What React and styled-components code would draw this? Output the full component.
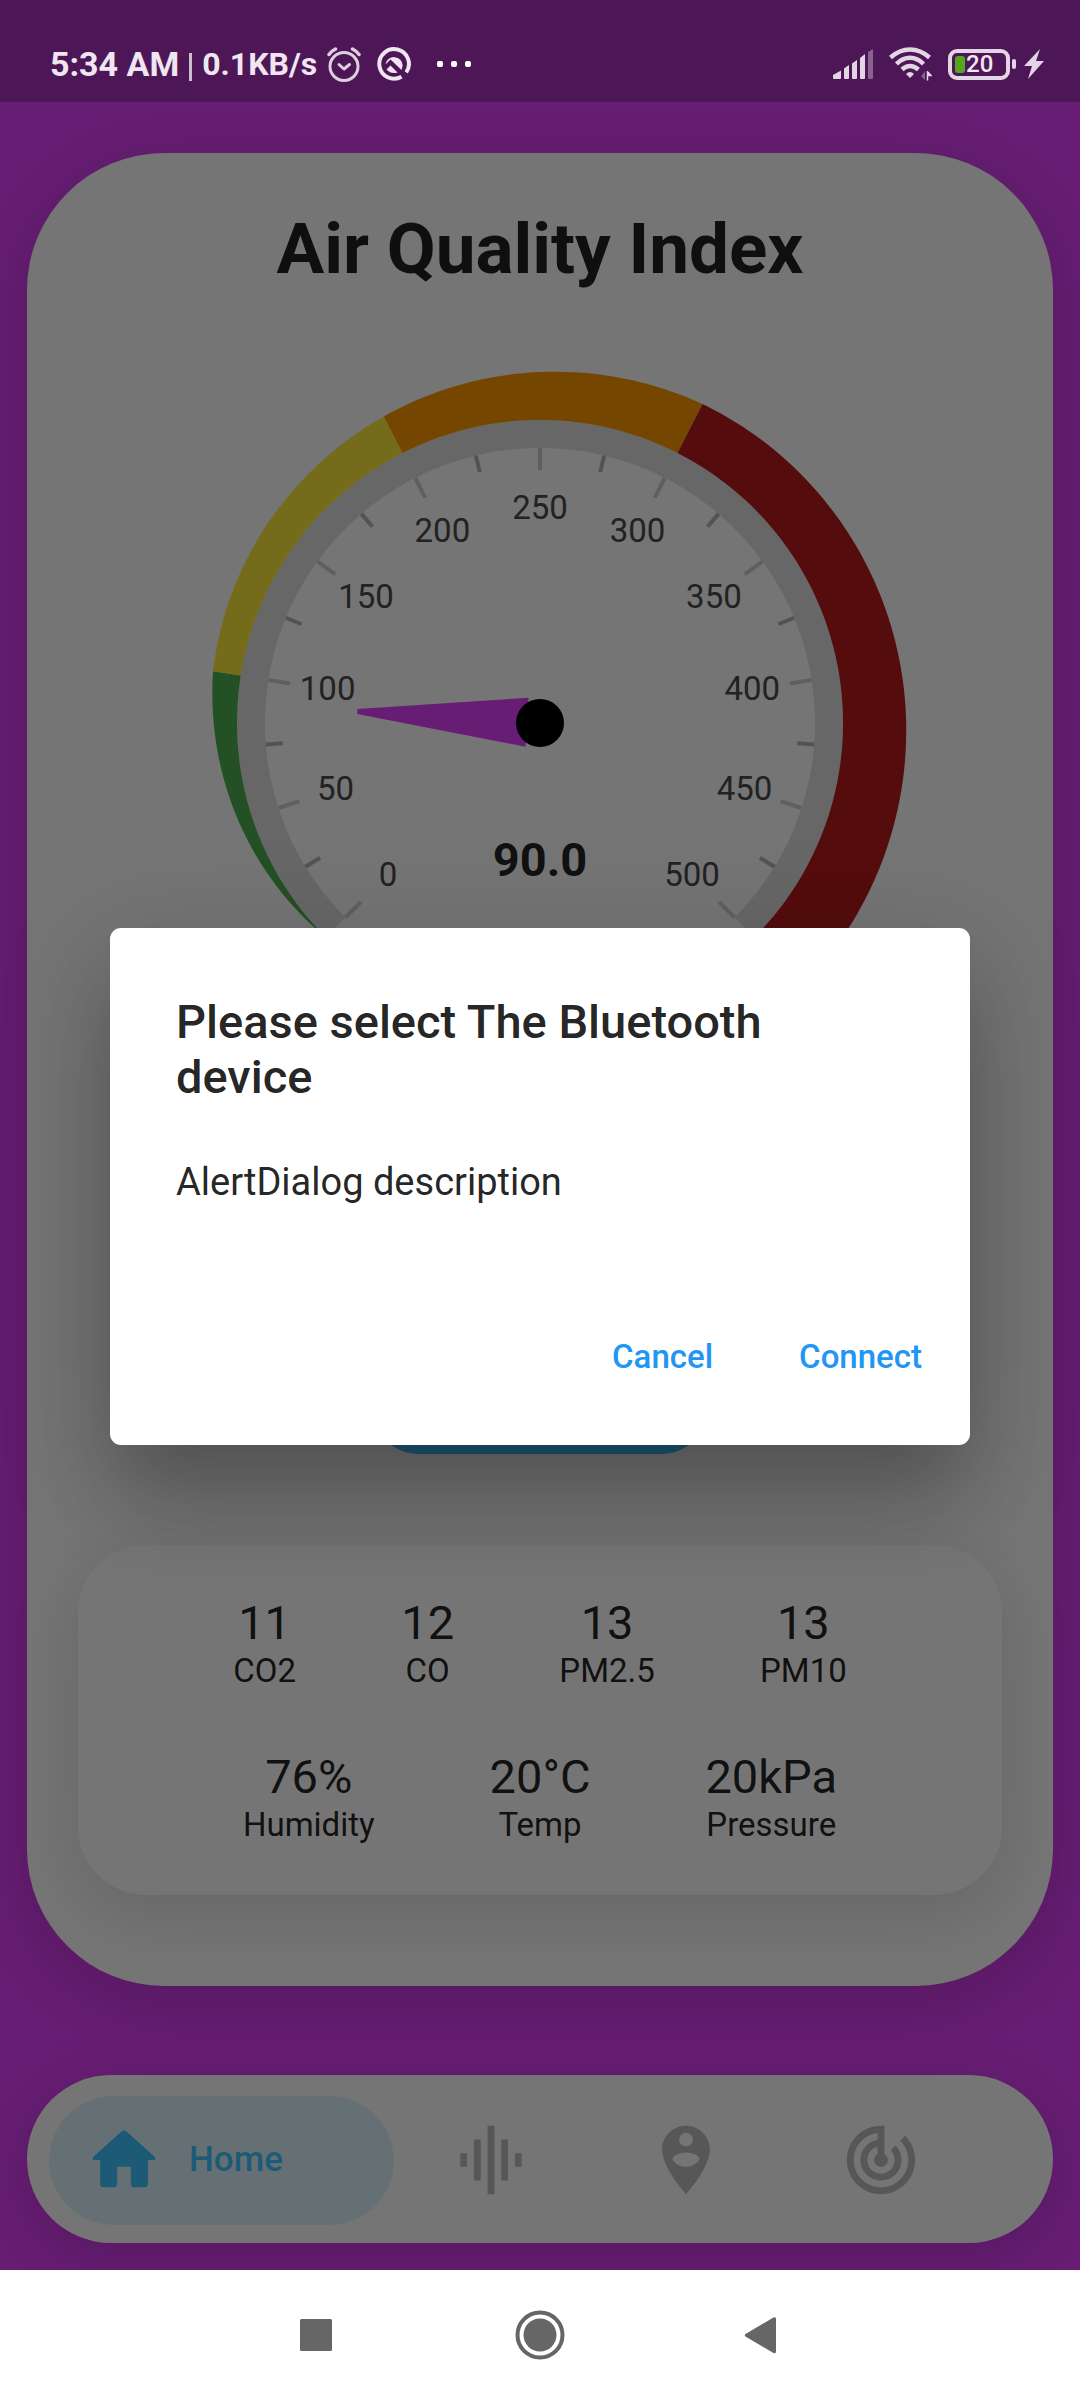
import React from "react";
import styled, { createGlobalStyle } from "styled-components";

const GlobalStyle = createGlobalStyle`
  * { box-sizing: border-box; }
  body {
    margin: 0;
    background: #ffffff;
    font-family: Roboto, "Liberation Sans", sans-serif;
    color: rgba(0, 0, 0, 0.87);
  }
  button {
    font-family: inherit;
    border: 0;
    padding: 0;
    background: none;
    cursor: pointer;
  }
  h1, h2, p, dl, dt, dd { margin: 0; }
`;

const Phone = styled.div`
  display: flex;
  flex-direction: column;
  min-height: 100vh;
`;

/* ---------- status bar ---------- */

const StatusBar = styled.header`
  position: relative;
  z-index: 2;
  display: flex;
  align-items: center;
  justify-content: space-between;
  height: 102px;
  padding: 26px 36px 0 50px;
  background: #4d1656;
  color: #efe6f1;
`;

const StatusGroup = styled.div`
  display: flex;
  align-items: center;
  gap: ${(p) => p.$gap}px;
`;

const Clock = styled.span`
  font-size: 34px;
  line-height: 40px;
  font-weight: 700;
`;

const Divider = styled.span`
  width: 3px;
  height: 28px;
  margin-top: 6px;
  background: #cdbfd0;
`;

const NetSpeed = styled.span`
  font-size: 32px;
  line-height: 40px;
  font-weight: 700;
`;

const Battery = styled.div`
  display: flex;
  align-items: center;
  gap: 2px;
`;

const BatteryShell = styled.div`
  display: flex;
  align-items: center;
  gap: 1px;
  width: 62px;
  height: 31px;
  padding: 0 3px;
  border: 4px solid #e2d6e4;
  border-radius: 9px;
  color: #efe6f1;
  font-size: 24px;
  line-height: 24px;
  font-weight: 500;
`;

const BatteryLevel = styled.span`
  width: 10px;
  height: 17px;
  border-radius: 3px;
  background: #55a51f;
`;

const BatteryNub = styled.span`
  width: 4px;
  height: 10px;
  border-radius: 2px;
  background: #e2d6e4;
`;

/* ---------- app body ---------- */

const AppBody = styled.main`
  position: relative;
  flex: 1;
  display: flex;
  flex-direction: column;
  gap: 89px;
  padding: 51px 27px 27px;
  background: #e040fb;
`;

const Card = styled.section`
  flex: 1;
  display: flex;
  flex-direction: column;
  align-items: center;
  padding: 54px 51px 91px;
  border-radius: 137px;
  background: #ffffff;
  box-shadow: 0 16px 76px rgba(0, 0, 0, 0.18);
`;

const Title = styled.h1`
  font-size: 71px;
  line-height: 84px;
  font-weight: 700;
`;

const GaugeArt = styled.svg`
  display: block;
  width: 756px;
  max-width: 100%;
  height: auto;
  margin-top: 54px;
`;

const PillButton = styled.button`
  width: 340px;
  height: 99px;
  margin-top: auto;
  border-radius: 50px;
  background: #40c4ff;
`;

const Stats = styled.div`
  display: flex;
  flex-direction: column;
  justify-content: space-between;
  align-self: stretch;
  height: 350px;
  margin-top: 91px;
  padding: 50px;
  border-radius: 68px;
  background: #ffffff;
  box-shadow: 0 16px 70px rgba(0, 0, 0, 0.14);
`;

const StatRow = styled.dl`
  display: flex;
  justify-content: space-evenly;
`;

const Stat = styled.div`
  display: flex;
  flex-direction: column-reverse;
  align-items: center;
`;

const StatValue = styled.dd`
  font-size: 47px;
  line-height: 56px;
`;

const StatLabel = styled.dt`
  font-size: 33px;
  line-height: 40px;
`;

/* ---------- bottom navigation ---------- */

const NavBar = styled.nav`
  display: flex;
  align-items: center;
  height: 168px;
  padding: 2px 75px 0 22px;
  border-radius: 84px;
  background: #ffffff;
  box-shadow: 0 14px 66px rgba(0, 0, 0, 0.16);
`;

const HomeTab = styled.button`
  display: flex;
  align-items: center;
  gap: 24px;
  width: 345px;
  height: 129px;
  padding-left: 34px;
  border-radius: 65px;
  background: rgba(64, 196, 255, 0.18);
  color: #40c4ff;
  font-size: 35px;
  line-height: 40px;
  font-weight: 500;
`;

const TabList = styled.div`
  flex: 1;
  display: flex;
`;

const Tab = styled.button`
  flex: 1;
  display: flex;
  justify-content: center;
  color: #bdbdbd;
`;

/* ---------- dialog ---------- */

const Scrim = styled.div`
  position: absolute;
  inset: 0;
  display: flex;
  align-items: center;
  justify-content: center;
  padding: 0 110px;
  background: rgba(0, 0, 0, 0.54);
`;

const Dialog = styled.section`
  width: 100%;
  padding: 66px 16px 38px 66px;
  border-radius: 11px;
  background: #ffffff;
  box-shadow:
    0 60px 80px -10px rgba(0, 0, 0, 0.18),
    0 30px 110px 10px rgba(0, 0, 0, 0.16);
`;

const DialogTitle = styled.h2`
  padding-right: 50px;
  font-size: 47px;
  line-height: 55px;
  font-weight: 500;
`;

const DialogText = styled.p`
  margin-top: 56px;
  font-size: 38px;
  line-height: 44px;
`;

const DialogActions = styled.div`
  display: flex;
  justify-content: flex-end;
  gap: 22px;
  margin-top: 104px;
`;

const TextButton = styled.button`
  height: 99px;
  padding: 0 32px;
  color: #2196f3;
  font-size: 33px;
  line-height: 40px;
  font-weight: 500;
`;

/* ---------- system navigation ---------- */

const SystemNav = styled.footer`
  position: relative;
  z-index: 2;
  display: flex;
  align-items: center;
  justify-content: center;
  gap: 172px;
  height: 130px;
  background: #ffffff;
  color: #666666;
`;

const SystemKey = styled.button`
  display: flex;
  width: 50px;
  height: 50px;
  color: inherit;
`;

/* ---------- gauge ---------- */

const MAX = 500;
const BAND_INNER = 303;
const RING_INNER = 275;

const angleOf = (value) => ((135 + (value / MAX) * 270) * Math.PI) / 180;
const point = (radius, value) => {
  const a = angleOf(value);
  return [radius * Math.cos(a), radius * Math.sin(a)];
};
const toPath = (points) =>
  "M" + points.map(([x, y]) => `${x.toFixed(2)} ${y.toFixed(2)}`).join("L") + "Z";

/* A band whose thickness runs from startWidth to endWidth as the value rises. */
const bandPath = ({ from, to, startWidth, endWidth }) => {
  const outer = [];
  const inner = [];
  for (let v = from; v <= to; v += 2) {
    const width = startWidth + ((v - from) / (to - from)) * (endWidth - startWidth);
    outer.push(point(BAND_INNER + width, v));
    inner.unshift(point(BAND_INNER, v));
  }
  return toPath([...outer, ...inner]);
};

const ringPath = () => {
  const outer = [];
  const inner = [];
  for (let v = 0; v <= MAX; v += 2) {
    outer.push(point(BAND_INNER, v));
    inner.unshift(point(RING_INNER, v));
  }
  return toPath([...outer, ...inner]);
};

const bands = [
  { from: 0, to: 100, startWidth: 0, endWidth: 28, color: "#4caf50" },
  { from: 100, to: 200, startWidth: 28, endWidth: 41, color: "#ffeb3b" },
  { from: 200, to: 300, startWidth: 41, endWidth: 55, color: "#ff9800" },
  { from: 300, to: 500, startWidth: 55, endWidth: 69, color: "#b71c1c" },
];
const majors = [0, 50, 100, 150, 200, 250, 300, 350, 400, 450, 500];

function Gauge({ value }) {
  const needleTurn = 135 + (value / MAX) * 270;
  return (
    <GaugeArt viewBox="-378 -378 756 684" role="img" aria-label="Air quality gauge">
      <path d={ringPath()} fill="#e0e0e0" />
      {bands.map((b) => (
        <path key={b.from} d={bandPath(b)} fill={b.color} />
      ))}
      {majors.slice(0, -1).map((m) => {
        const [x1, y1] = point(RING_INNER, m + 25);
        const [x2, y2] = point(RING_INNER - 17, m + 25);
        return <line key={m} x1={x1} y1={y1} x2={x2} y2={y2} stroke="#b6b6b6" strokeWidth="4" />;
      })}
      {majors.map((m) => {
        const [x1, y1] = point(RING_INNER, m);
        const [x2, y2] = point(RING_INNER - 22, m);
        return <line key={m} x1={x1} y1={y1} x2={x2} y2={y2} stroke="#d0d0d0" strokeWidth="4" />;
      })}
      {majors.map((m) => {
        const [x, y] = point(215, m);
        return (
          <text key={m} x={x} y={y + 11} textAnchor="middle" fontSize="33" fill="#4a4a4a">
            {m}
          </text>
        );
      })}
      <text x="0" y="153" textAnchor="middle" fontSize="47" fontWeight="700" fill="rgba(0,0,0,0.87)">
        {value.toFixed(1)}
      </text>
      <path d="M13 -24.5L183 -2.5V2.5L13 24.5Z" fill="#e040fb" transform={`rotate(${needleTurn})`} />
      <circle r="24" fill="#000000" />
    </GaugeArt>
  );
}

/* ---------- icons ---------- */

const MaterialIcon = ({ d }) => (
  <svg width="82" height="82" viewBox="0 0 24 24" fill="currentColor" aria-hidden="true">
    <path d={d} />
  </svg>
);

const HOME =
  "M10 19v-5h4v5c0 .55.45 1 1 1h3c.55 0 1-.45 1-1v-7h1.7c.46 0 .68-.57.33-.87L12.67 3.6c-.38-.34-.96-.34-1.34 0l-8.36 7.53c-.34.3-.13.87.33.87H5v7c0 .55.45 1 1 1h3c.55 0 1-.45 1-1z";
const EQUALIZER = "M7 18h2V6H7v12zm4 4h2V2h-2v20zm-8-8h2v-4H3v4zm12 4h2V6h-2v12zm4-8v4h2v-4h-2z";
const PERSON_PIN =
  "M12 2C8.14 2 5 5.14 5 9c0 5.25 7 13 7 13s7-7.75 7-13c0-3.86-3.14-7-7-7zm0 2c1.1 0 2 .9 2 2 0 1.11-.9 2-2 2s-2-.89-2-2c0-1.1.9-2 2-2zm0 10c-1.67 0-3.14-.85-4-2.15.02-1.32 2.67-2.05 4-2.05s3.98.73 4 2.05c-.86 1.3-2.33 2.15-4 2.15z";
const RADAR =
  "M19.07 4.93l-1.41 1.41C19.1 7.79 20 9.79 20 12c0 4.42-3.58 8-8 8s-8-3.58-8-8c0-4.08 3.05-7.44 7-7.93v2.02C8.16 6.57 6 9.03 6 12c0 3.31 2.69 6 6 6s6-2.69 6-6c0-1.66-.67-3.16-1.76-4.24l-1.41 1.41C15.55 9.9 16 10.9 16 12c0 2.21-1.79 4-4 4s-4-1.79-4-4c0-1.86 1.28-3.41 3-3.86v2.14c-.6.35-1 .98-1 1.72 0 1.1.9 2 2 2s2-.9 2-2c0-.74-.4-1.38-1-1.72V2h-1C6.48 2 2 6.48 2 12s4.48 10 10 10 10-4.48 10-10c0-2.76-1.12-5.26-2.93-7.07z";

const AlarmIcon = () => (
  <svg width="34" height="35" viewBox="0 0 34 35" fill="none" stroke="#dccfde" strokeLinecap="round" aria-hidden="true">
    <circle cx="17" cy="19.5" r="14" strokeWidth="3" />
    <path d="M12 17.5l5 4.500 5.500-4.500" strokeWidth="3" strokeLinejoin="round" />
    <path d="M2 7.500Q4.500 4 8.500 2M32 7.500Q29.500 4 25.500 2" strokeWidth="3.500" />
  </svg>
);

const CompassIcon = () => (
  <svg width="34" height="34" viewBox="0 0 34 34" aria-hidden="true">
    <path d="M24.500 29.700A14.800 14.800 0 1 1 29.200 25.400" fill="none" stroke="#efe6f1" strokeWidth="4" />
    <path d="M8.500 17A8.700 8.700 0 0 1 25.700 18.500L24.500 23L13.500 12.500L9.500 16.500Z" fill="#efe6f1" />
    <path d="M13.500 18.500L20.500 25.500Q14 27.500 9.500 22.500Z" fill="#efe6f1" />
  </svg>
);

const DotsIcon = () => (
  <svg width="34" height="6" viewBox="0 0 34 6" fill="#ffffff" aria-hidden="true">
    <rect width="6" height="6" rx="2" />
    <rect x="14" width="6" height="6" rx="2" />
    <rect x="28" width="6" height="6" rx="2" />
  </svg>
);

const SignalIcon = () => (
  <svg width="40" height="30" viewBox="0 0 40 30" fill="#e2d6e4" aria-hidden="true">
    <path d="M0 26L8 21.500V29Q8 30 7 30H1Q0 30 0 29Z" />
    <path d="M11 19.500L16 16V29Q16 30 15 30H12Q11 30 11 29Z" />
    <path d="M19 14.500L24 11V29Q24 30 23 30H20Q19 30 19 29Z" />
    <path d="M27 9L32 5V29Q32 30 31 30H28Q27 30 27 29Z" />
    <path d="M35 3L40 0V29Q40 30 39 30H36Q35 30 35 29Z" opacity="0.4" />
  </svg>
);

const WifiIcon = () => (
  <svg width="43" height="34" viewBox="0 0 43 34" fill="none" stroke="#e2d6e4" strokeWidth="4.500" aria-hidden="true">
    <path d="M1.500 10.500Q10.500 2.500 21 2.500T40.500 10.500" />
    <path d="M7.500 17Q13.500 10.800 21 10.800T34.500 17" />
    <path d="M13 22.500Q17 19 21 19T29.500 22.500" />
    <path d="M17 27Q21 23 25 27L21 31Z" fill="#e2d6e4" stroke="none" />
    <path d="M36 24V33L32 29.500Z" fill="#84608b" stroke="none" />
    <path d="M38.500 24V33.500M38.500 24.500L42 28.500H39" fill="#e2d6e4" strokeWidth="1.500" />
  </svg>
);

const BoltIcon = () => (
  <svg width="20" height="30" viewBox="0 0 20 30" fill="#e2d6e4" aria-hidden="true">
    <path d="M16 0L0 17H8L4 30L20 12H12Z" />
  </svg>
);

/* ---------- data ---------- */

const gases = [
  ["11", "CO2"],
  ["12", "CO"],
  ["13", "PM2.5"],
  ["13", "PM10"],
];
const climate = [
  ["76%", "Humidity"],
  ["20°C", "Temp"],
  ["20kPa", "Pressure"],
];
const tabs = [
  ["Sound", EQUALIZER],
  ["Location", PERSON_PIN],
  ["Tracking", RADAR],
];

const Readings = ({ items }) => (
  <StatRow>
    {items.map(([value, label]) => (
      <Stat key={label}>
        <StatLabel>{label}</StatLabel>
        <StatValue>{value}</StatValue>
      </Stat>
    ))}
  </StatRow>
);

export default function App() {
  return (
    <Phone>
      <GlobalStyle />
      <StatusBar>
        <StatusGroup $gap={26}>
          <StatusGroup $gap={10}>
            <Clock>5:34 AM</Clock>
            <Divider />
            <NetSpeed>0.1KB/s</NetSpeed>
            <StatusGroup $gap={16}>
              <AlarmIcon />
              <CompassIcon />
            </StatusGroup>
          </StatusGroup>
          <DotsIcon />
        </StatusGroup>
        <StatusGroup $gap={16}>
          <SignalIcon />
          <WifiIcon />
          <StatusGroup $gap={8}>
            <Battery>
              <BatteryShell>
                <BatteryLevel />
                20
              </BatteryShell>
              <BatteryNub />
            </Battery>
            <BoltIcon />
          </StatusGroup>
        </StatusGroup>
      </StatusBar>

      <AppBody>
        <Card>
          <Title>Air Quality Index</Title>
          <Gauge value={90} />
          <PillButton aria-label="Select device" />
          <Stats>
            <Readings items={gases} />
            <Readings items={climate} />
          </Stats>
        </Card>

        <NavBar>
          <HomeTab>
            <MaterialIcon d={HOME} />
            Home
          </HomeTab>
          <TabList>
            {tabs.map(([name, d]) => (
              <Tab key={name} aria-label={name}>
                <MaterialIcon d={d} />
              </Tab>
            ))}
          </TabList>
        </NavBar>

        <Scrim>
          <Dialog role="alertdialog" aria-labelledby="dialog-title" aria-describedby="dialog-text">
            <DialogTitle id="dialog-title">Please select The Bluetooth device</DialogTitle>
            <DialogText id="dialog-text">AlertDialog description</DialogText>
            <DialogActions>
              <TextButton>Cancel</TextButton>
              <TextButton>Connect</TextButton>
            </DialogActions>
          </Dialog>
        </Scrim>
      </AppBody>

      <SystemNav>
        <SystemKey aria-label="Recent apps">
          <svg width="50" height="50" viewBox="0 0 50 50" fill="currentColor">
            <rect x="7" y="9" width="32" height="32" rx="1.500" />
          </svg>
        </SystemKey>
        <SystemKey aria-label="Home screen">
          <svg width="50" height="50" viewBox="0 0 50 50" fill="currentColor">
            <circle cx="25" cy="25" r="22.500" fill="none" stroke="currentColor" strokeWidth="4" />
            <circle cx="25" cy="25" r="16.500" />
          </svg>
        </SystemKey>
        <SystemKey aria-label="Back">
          <svg width="50" height="50" viewBox="0 0 50 50" fill="currentColor">
            <path d="M8.500 26.500Q7 25 8.500 24L36.500 7.500Q39 6.500 39 9V41.500Q39 44 36.500 43Z" />
          </svg>
        </SystemKey>
      </SystemNav>
    </Phone>
  );
}
